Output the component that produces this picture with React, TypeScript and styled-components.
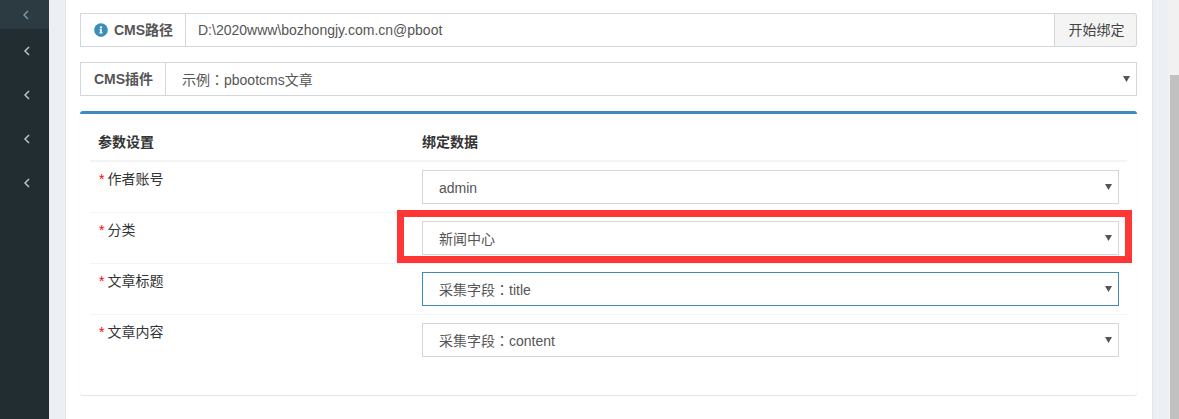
import * as React from "react";
import styled, { createGlobalStyle } from "styled-components";
import { FaInfoCircle } from "react-icons/fa";

const GlobalStyle = createGlobalStyle`
  * {
    box-sizing: border-box;
  }
  html,
  body {
    margin: 0;
    height: 419px;
    overflow: hidden;
    background: #ecf0f5;
    font-family: "Liberation Sans", "Noto Sans CJK SC", sans-serif;
    font-size: 14px;
    line-height: 20px;
    color: #333;
  }
`;

const Page = styled.div`
  display: flex;
  height: 419px;
  overflow: hidden;
`;

const Sidebar = styled.nav`
  flex: 0 0 49px;
  background: #222d32;
`;

const SideItem = styled.div<{ $active?: boolean }>`
  display: flex;
  align-items: center;
  justify-content: center;
  padding-left: ${(p) => (p.$active ? "2px" : "4px")};
  height: ${(p) => (p.$active ? "29px" : "44px")};
  background: ${(p) => (p.$active ? "#2c3b41" : "transparent")};
  color: ${(p) => (p.$active ? "#7d98a6" : "#b8c7ce")};
`;

const Chevron = styled.svg`
  width: 6px;
  height: 10px;
  fill: none;
  stroke: currentColor;
  stroke-width: 1.5;
`;

const Gutter = styled.div`
  flex: 1;
  padding: 0 15px 0 16px;
  min-width: 0;
`;

const Content = styled.main`
  position: relative;
  height: 419px;
  background: #fff;
  border-left: 1px solid #e2e5ea;
  border-right: 1px solid #e2e5ea;
  padding: 13px 15px 0 14px;
`;

const Scrollbar = styled.div`
  flex: 0 0 11px;
  background: #f1f1f1;
  padding: 75px 0 0 2px;
`;

const Thumb = styled.div`
  height: 344px;
  background: #c1c1c1;
`;

const InputGroup = styled.div`
  display: flex;
  height: 34px;
  margin-bottom: 15px;
`;

const Addon = styled.label<{ $width: number }>`
  flex: 0 0 ${(p) => p.$width}px;
  display: flex;
  align-items: center;
  justify-content: center;
  gap: 6px;
  padding-left: 1px;
  border: 1px solid #d2d6de;
  border-right: 0;
  font-weight: 700;
  color: #555;
`;

const InfoIcon = styled(FaInfoCircle)`
  color: #3c8dbc;
  font-size: 14px;
`;

const TextField = styled.input`
  flex: 1;
  min-width: 0;
  height: 34px;
  padding: 0 12px;
  border: 1px solid #d2d6de;
  border-radius: 0;
  outline: none;
  font: inherit;
  color: #555;
`;

const BindButton = styled.button`
  flex: 0 0 82px;
  border: 1px solid #d2d6de;
  border-left: 0;
  border-radius: 0 3px 3px 0;
  background: #f4f4f4;
  font: inherit;
  color: #444;
  padding: 0 0 0 2px;
`;

const SelectWrap = styled.div`
  position: relative;
  flex: 1;
  min-width: 0;
  height: 34px;
`;

const SelectBox = styled.select<{ $focused?: boolean }>`
  appearance: none;
  display: block;
  width: 100%;
  height: 34px;
  padding: 2px 16px 0;
  border: 1px solid ${(p) => (p.$focused ? "#3c8dbc" : "#d2d6de")};
  border-radius: 0;
  background: #fff;
  outline: none;
  font-family: "Liberation Sans", "Noto Sans CJK TC", sans-serif;
  font-size: 14px;
  color: #555;
`;

const Caret = styled.svg`
  position: absolute;
  top: 14px;
  right: 7px;
  width: 7px;
  height: 6px;
  fill: #555;
  pointer-events: none;
`;

const Box = styled.section`
  height: 284px;
  border-top: 3px solid #3c8dbc;
  border-radius: 3px;
  background: #fff;
  box-shadow: 0 1px 1px rgba(0, 0, 0, 0.1), 0 0 1px rgba(0, 0, 0, 0.06);
  padding: 10px;
`;

const Row = styled.div<{ $head?: boolean }>`
  display: grid;
  grid-template-columns: 324px 1fr;
  padding: 8px;
  ${(p) => (p.$head ? "font-weight: 700;" : "border-top: 1px solid #f4f4f4;")}
  ${(p) => (p.$head ? "border-bottom: 1px solid #f4f4f4;" : "")}
`;

const FieldName = styled.div`
  padding-left: 1px;
  line-height: 18px;
`;

const Star = styled.span`
  color: #f00;
  margin-right: 3px;
`;

const Marker = styled.div`
  position: absolute;
  left: 331px;
  top: 210px;
  width: 735px;
  height: 53px;
  border: 7px solid #ff3636;
  pointer-events: none;
`;

const AngleLeft = () => (
  <Chevron viewBox="0 0 6 10">
    <path d="M5 1L1 5l4 4" />
  </Chevron>
);

const Select = ({ value, focused }: { value: string; focused?: boolean }) => (
  <SelectWrap>
    <SelectBox $focused={focused} defaultValue={value}>
      <option>{value}</option>
    </SelectBox>
    <Caret viewBox="0 0 7 6">
      <path d="M0 0h7L3.5 6z" />
    </Caret>
  </SelectWrap>
);

const fields = [
  { name: "作者账号", value: "admin" },
  { name: "分类", value: "新闻中心" },
  { name: "文章标题", value: "采集字段：title", focused: true },
  { name: "文章内容", value: "采集字段：content" },
];

export default function App() {
  return (
    <Page>
      <GlobalStyle />
      <Sidebar>
        <SideItem $active>
          <AngleLeft />
        </SideItem>
        {[0, 1, 2, 3].map((i) => (
          <SideItem key={i}>
            <AngleLeft />
          </SideItem>
        ))}
      </Sidebar>
      <Gutter>
        <Content>
          <InputGroup>
            <Addon $width={105}>
              <InfoIcon />
              CMS路径
            </Addon>
            <TextField defaultValue="D:\2020www\bozhongjy.com.cn@pboot" />
            <BindButton>开始绑定</BindButton>
          </InputGroup>
          <InputGroup>
            <Addon $width={85}>CMS插件</Addon>
            <Select value="示例：pbootcms文章" />
          </InputGroup>
          <Box>
            <Row $head>
              <div>参数设置</div>
              <div>绑定数据</div>
            </Row>
            {fields.map((f) => (
              <Row key={f.name}>
                <FieldName>
                  <Star>*</Star>
                  {f.name}
                </FieldName>
                <Select value={f.value} focused={f.focused} />
              </Row>
            ))}
          </Box>
          <Marker />
        </Content>
      </Gutter>
      <Scrollbar>
        <Thumb />
      </Scrollbar>
    </Page>
  );
}
